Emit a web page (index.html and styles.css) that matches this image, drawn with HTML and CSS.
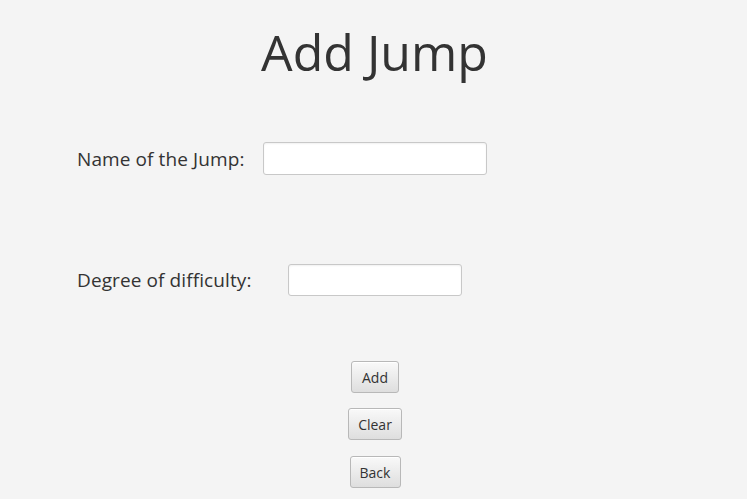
FILE: index.html
```html
<!DOCTYPE html>
<html>
<head>
<meta charset="utf-8">
<link rel="stylesheet" href="styles.css">
</head>
<body>
<div class="page">
  <h1 class="title">Add Jump</h1>
  <div class="row row-name">
    <span class="label label-name">Name of the Jump:</span>
    <input class="field field-name" type="text">
  </div>
  <div class="row row-degree">
    <span class="label label-degree">Degree of difficulty:</span>
    <input class="field field-degree" type="text">
  </div>
  <div class="buttons">
    <button class="btn btn-add">Add</button>
    <button class="btn btn-clear">Clear</button>
    <button class="btn btn-back">Back</button>
  </div>
</div>
</body>
</html>
```
FILE: styles.css
```css
html, body {
  margin: 0;
  padding: 0;
  background: #f4f4f4;
}
.page {
  width: 747px;
  height: 499px;
  display: flex;
  flex-direction: column;
  font-family: "Open Sans", "Noto Sans", sans-serif;
  color: #333333;
}
.title {
  margin: 22px 0 0 2px;
  height: 60px;
  line-height: 60px;
  font-size: 50px;
  font-weight: 400;
  text-align: center;
  letter-spacing: 0;
}
.row {
  display: flex;
  align-items: center;
  padding-left: 77px;
}
.row-name {
  margin-top: 60px;
  height: 33px;
}
.row-degree {
  margin-top: 89px;
  height: 32px;
}
.label {
  font-size: 19px;
  letter-spacing: 0.1px;
  flex: none;
}
.label-name { width: 186px; }
.label-degree { width: 211px; }
.field {
  box-sizing: border-box;
  border: 1px solid #c8c8c8;
  border-radius: 3px;
  background: #ffffff;
  box-shadow: inset 0 1px 2px rgba(0,0,0,0.06);
  padding: 0;
  margin: 0;
  outline: none;
}
.field-name {
  width: 224px;
  height: 33px;
}
.field-degree {
  width: 174px;
  height: 32px;
}
.buttons {
  margin-top: 65px;
  padding-left: 3px;
  display: flex;
  flex-direction: column;
  align-items: center;
  gap: 15px;
}
.btn {
  box-sizing: border-box;
  height: 32px;
  padding: 0;
  font-family: "Open Sans", "Noto Sans", sans-serif;
  font-size: 14px;
  color: #333333;
  border: 1px solid #b8b8b8;
  border-radius: 3px;
  background: linear-gradient(#f9f9f9, #dedede);
  box-shadow: inset 0 1px 0 #ffffff;
}
.btn-add { width: 48px; }
.btn-clear { width: 54px; }
.btn-back { width: 51px; margin-top: 1px; }
```
